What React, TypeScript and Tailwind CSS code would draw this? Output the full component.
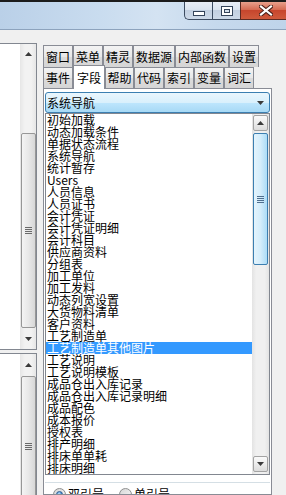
import React from 'react'

const items = [
  '初始加载',
  '动态加载条件',
  '单据状态流程',
  '系统导航',
  '统计暂存',
  'Users',
  '人员信息',
  '人员证书',
  '会计凭证',
  '会计凭证明细',
  '会计科目',
  '供应商资料',
  '分组表',
  '加工单位',
  '加工发料',
  '动态列宽设置',
  '大货物料清单',
  '客户资料',
  '工艺制造单',
  '工艺制造单其他图片',
  '工艺说明',
  '工艺说明模板',
  '成品仓出入库记录',
  '成品仓出入库记录明细',
  '成品配色',
  '成本报价',
  '授权表',
  '排产明细',
  '排床单单耗',
  '排床明细',
]

const topTabs = [
  { label: '窗口', w: 'w-[30px]' },
  { label: '菜单', w: 'w-[30px]' },
  { label: '精灵', w: 'w-[30px]' },
  { label: '数据源', w: 'w-[42px]' },
  { label: '内部函数', w: 'w-[54px]' },
  { label: '设置', w: 'w-[30px]' },
]

const bottomTabs = [
  { label: '事件', w: 'w-[30px]' },
  { label: '字段', w: 'w-[32px]', active: true },
  { label: '帮助', w: 'w-[29px]' },
  { label: '代码', w: 'w-[30px]' },
  { label: '索引', w: 'w-[30px]' },
  { label: '变量', w: 'w-[30px]' },
  { label: '词汇', w: 'w-[30px]' },
]

const Tri = ({ up }: { up?: boolean }) => (
  <svg width="7" height="4" viewBox="0 0 7 4" className="text-[#3a3a3a]">
    <path d={up ? 'M0 4 L3.5 0 L7 4 Z' : 'M0 0 L7 0 L3.5 4 Z'} fill="currentColor" />
  </svg>
)

const Grip = ({ color }: { color: string }) => (
  <div className="flex flex-col gap-px">
    {[0, 1, 2, 3].map((i) => (
      <div key={i} className={`h-px w-[7px] ${color}`} />
    ))}
  </div>
)

const Tab = ({ label, w, active }: { label: string; w: string; active?: boolean }) =>
  active ? (
    <div
      className={`${w} shrink-0 relative z-10 -mt-[2px] h-[24px] self-start border border-b-0 border-[#898c95] bg-white flex items-center justify-center leading-[12px]`}
    >
      {label}
    </div>
  ) : (
    <div
      className={`${w} shrink-0 h-full border border-b-0 border-[#898c95] bg-[linear-gradient(#f3f3f3,#e8e8e8_50%,#dcdcdc_51%,#d5d5d5)] flex items-center justify-center leading-[12px]`}
    >
      {label}
    </div>
  )

const LeftScroll = ({ top }: { top: boolean }) => (
  <div className="w-[16px] flex flex-col items-center bg-[linear-gradient(to_right,#e6e6e6,#f2f2f2_30%,#f2f2f2_70%,#e6e6e6)]">
    <div className={`${top ? 'h-[20px]' : 'h-[22px]'} shrink-0 w-full flex items-center justify-center`}>
      <Tri up />
    </div>
    {top && <div className="h-[69px] shrink-0" />}
    <div
      className={`${top ? 'h-[195px]' : 'h-[140px]'} shrink-0 w-[15px] rounded-[2px] border border-[#979797] bg-[linear-gradient(to_right,#f4f4f4,#e8e8e8_50%,#d7d7d7)] flex items-center justify-center`}
    >
      <Grip color="bg-[#6a6a6a]" />
    </div>
    {top && (
      <>
        <div className="flex-1" />
        <div className="h-[20px] shrink-0 w-full flex items-center justify-center">
          <Tri />
        </div>
      </>
    )}
  </div>
)

const ListButton = ({ up }: { up?: boolean }) => (
  <div className="h-[16px] mx-px rounded-[2px] border border-[#a3a3a3] bg-[linear-gradient(#fafafa,#ececec_50%,#dcdcdc)] flex items-center justify-center">
    <Tri up={up} />
  </div>
)

const Radio = ({ checked }: { checked?: boolean }) => (
  <div className="w-[13px] h-[13px] rounded-full border border-[#8e8f8f] bg-[linear-gradient(135deg,#d6d6d6,#f8f8f8)] flex items-center justify-center">
    {checked && (
      <div className="w-[7px] h-[7px] rounded-full border border-[#2b5d93] bg-[radial-gradient(circle_at_40%_35%,#bfe3fb,#3d86cf_60%,#1c4f91)]" />
    )}
  </div>
)

const TitleBar = () => (
  <div className="h-[30px] shrink-0 border-t-2 border-t-[#1c1c1c] border-b border-b-[#8da3bd] bg-[linear-gradient(to_right,#bad0e8,#c9dcef_35%,#d4e3f2_55%,#c6d9ed_75%,#bfd4ea)] flex justify-end items-start">
    <div className="flex h-[18px]">
      <div className="w-[28px] h-full rounded-bl-[5px] border-l border-b border-[#3c4b60] bg-[linear-gradient(#e9eef6,#dbe4ef_45%,#c3d0e1_50%,#cdd9e8)] flex items-end justify-center pb-[3px]">
        <div className="w-[12px] h-[5px] border border-[#35445a] bg-white" />
      </div>
      <div className="w-[28px] h-full border-l border-b border-[#3c4b60] bg-[linear-gradient(#e9eef6,#dbe4ef_45%,#c3d0e1_50%,#cdd9e8)] flex items-center justify-center">
        <div className="w-[12px] h-[10px] border border-[#35445a] bg-white pt-[2px] px-[2px] pb-[2px]">
          <div className="w-full h-full border border-[#35445a] bg-[#d6e0ec]" />
        </div>
      </div>
      <div className="w-[46px] h-full border-l border-b border-[#5e2a22] bg-[linear-gradient(#e8a08c,#d66b53_45%,#c7462d_50%,#d05a3c)] flex items-center justify-center pl-[4px]">
        <svg width="14" height="11" viewBox="0 0 14 11">
          <path d="M2 1.5 L12 9.5 M12 1.5 L2 9.5" stroke="#4a1f18" strokeWidth="4.2" strokeLinecap="square" />
          <path d="M2 1.5 L12 9.5 M12 1.5 L2 9.5" stroke="#ffffff" strokeWidth="2.2" strokeLinecap="square" />
        </svg>
      </div>
    </div>
  </div>
)

export default function App() {
  return (
    <div className="w-[286px] h-[495px] overflow-hidden bg-[#f0f0f0] flex flex-col text-[12px] text-black font-['Noto_Sans_CJK_SC','Liberation_Sans',sans-serif]">
      <TitleBar />
      <div className="flex-1 flex min-h-0 pt-[13px]">
        {/* left panes */}
        <div className="w-[37px] shrink-0 flex flex-col min-h-0">
          <div className="h-[307px] shrink-0 flex border-t border-r border-b border-[#828790]">
            <div className="w-[20px] bg-white" />
            <LeftScroll top />
          </div>
          <div className="mt-[3px] flex-1 min-h-0 flex border-t border-r border-[#828790] overflow-hidden">
            <div className="w-[20px] bg-white" />
            <LeftScroll top={false} />
          </div>
        </div>

        {/* tab control */}
        <div className="ml-[6px] w-[229px] shrink-0 flex flex-col pt-[2px] min-h-0">
          <div className="flex h-[22px] shrink-0">
            {topTabs.map((t) => (
              <Tab key={t.label} {...t} />
            ))}
          </div>
          <div className="flex h-[21px] shrink-0">
            {bottomTabs.map((t) => (
              <Tab key={t.label} {...t} />
            ))}
          </div>
          <div className="flex-1 min-h-0 overflow-hidden border border-[#898c95] bg-white px-px pt-[3px] flex flex-col">
            <div className="h-[21px] shrink-0 rounded-[3px] border border-[#3c7fb1] bg-[linear-gradient(#eaf6fd,#d9f0fc_50%,#bee6fd_51%,#a7d9f5)] flex items-center pl-px pr-[5px]">
              <span className="flex-1 leading-[12px]">系统导航</span>
              <Tri />
            </div>
            <div className="h-[362px] shrink-0 border border-[#828790] flex">
              <div className="flex-1 flex flex-col">
                {items.map((it, i) => (
                  <div
                    key={it}
                    className={`h-[12px] shrink-0 leading-[12px] pl-px whitespace-nowrap overflow-hidden ${
                      i === 19 ? 'bg-[#3399ff] text-white' : ''
                    }`}
                  >
                    {it}
                  </div>
                ))}
              </div>
              <div className="w-[17px] flex flex-col bg-[linear-gradient(to_right,#e3e3e3,#f0f0f0_25%,#f0f0f0_75%,#e3e3e3)]">
                <div className="mt-px">
                  <ListButton up />
                </div>
                <div className="mt-[2px] h-[132px] shrink-0 mx-px rounded-[2px] border border-[#3c7fb1] bg-[linear-gradient(to_right,#e4f4fd,#d4edfb_50%,#acdcf7)] flex items-center justify-center">
                  <Grip color="bg-[#4f6f8f]" />
                </div>
                <div className="flex-1" />
                <div className="mb-[2px]">
                  <ListButton />
                </div>
              </div>
            </div>
            <div className="mt-[7px] shrink-0 border-t border-[#d5dfe5] flex items-center pl-[8px] pt-[4px] leading-[14px]">
              <Radio checked />
              <span className="ml-[2px]">双引号</span>
              <div className="ml-[15px]">
                <Radio />
              </div>
              <span className="ml-[2px]">单引号</span>
            </div>
          </div>
        </div>
      </div>
    </div>
  )
}
